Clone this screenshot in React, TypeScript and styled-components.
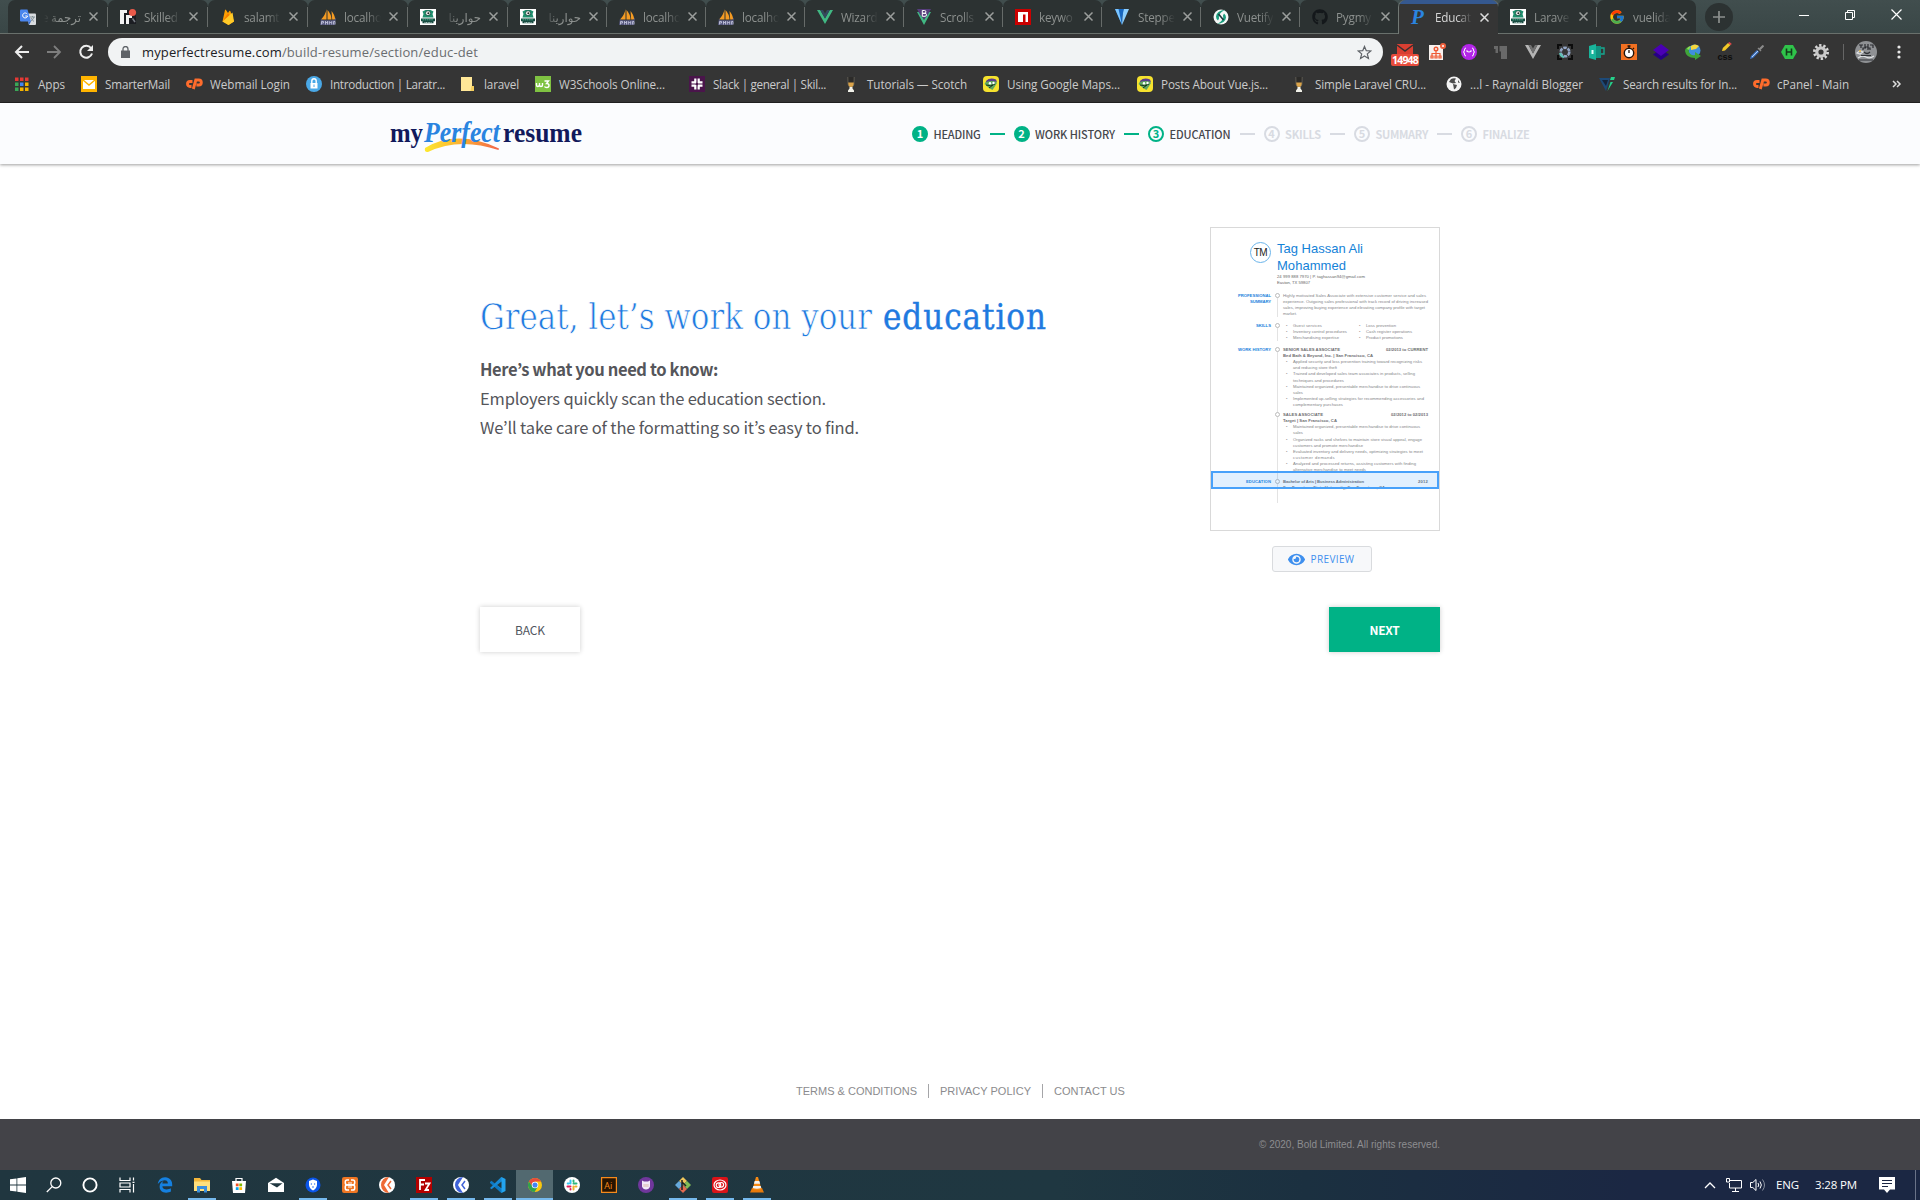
import React, { useLayoutEffect, useRef, useState } from "react";
import styled, { createGlobalStyle } from "styled-components";
import { FaGithub, FaEye, FaEdgeLegacy } from "react-icons/fa";
import { FcGoogle } from "react-icons/fc";

const SOURCE = `"Noto Sans CJK KR", "Open Sans", sans-serif`;
const SEGOE = `"Open Sans", "Noto Sans", "DejaVu Sans", sans-serif`;
const ARIAL = `"Liberation Sans", sans-serif`;

const Global = createGlobalStyle`
  * { box-sizing: border-box; }
  body { margin: 0; background: #fff; overflow: hidden; }
  svg { display: block; flex: none; }
`;

/* Text set to a fixed measure: the tracking is worked out from the natural width. */
const Measure = styled.span`
  display: inline-block;
  white-space: pre;
`;
const Fit = ({ w, children }: { w: number; children: React.ReactNode }) => {
  const ref = useRef<HTMLSpanElement>(null);
  const [track, setTrack] = useState(0);
  useLayoutEffect(() => {
    const el = ref.current;
    if (!el) return;
    const n = (el.textContent || "").length;
    setTrack((w - el.getBoundingClientRect().width) / n);
  }, [w]);
  return (
    <Measure ref={ref} style={{ letterSpacing: `${track}px` }}>
      {children}
    </Measure>
  );
};

/* ---------- icons ---------- */
const icons: Record<string, React.ReactNode> = {
  translate: (
    <>
      <path d="M6 4.500h9q1 0 1 1V15q0 1-1 1H9z" fill="#d9dcdf" />
      <path d="M0 1.500Q0 .5 1 .5h6.500L11 12.500H1q-1 0-1-1z" fill="#4a86ee" />
      <path d="M7.300 5.200A2.500 2.500 0 1 0 7.600 7H5.300" stroke="#fff" fill="none" />
      <path d="M10 8h5M12.500 7v1M14 8q-1 3-3.500 4.500M11 9q1 2 3 3.500" stroke="#7b8a92" strokeWidth=".9" fill="none" />
      <path d="M8 12.500h3l-2 3.500z" fill="#3367c7" />
    </>
  ),
  skilled: (
    <>
      <path d="M0 1h16v14H0z" fill="#1b1d22" />
      <path d="M0 1h7v3H4v11H0zM6 6h6v3H9v6H6z" fill="#f3f3f3" />
      <path d="M12.500 9.500 15 13" stroke="#777c84" strokeWidth="1.500" />
      <circle cx="12.500" cy="3.500" r="3.600" fill="#ea5a4a" />
    </>
  ),
  firebase: (
    <>
      <path d="M2.500 12.500 5 1q.4-1 1 0l2 3 1.300-2q.5-.6 1 0L14 12.500 8.500 16z" fill="#ffa000" />
      <path d="M2.500 12.500 8 4l2 3z" fill="#f57c00" />
      <path d="M2.500 12.500 12.500 3.500l1.500 9L8.500 16z" fill="#ffca28" />
    </>
  ),
  pma: (
    <>
      <path d="M6.500 0v10.500H1Q5.500 6 6.500 0zM7.500 1q4 4.500 4 9.500h-4zM11.500 2q3.700 4.500 3.700 8.500h-3z" fill="#f59b23" />
      <path d="M1 9.500q0 1.500 3 1.800h8q2.500 0 4-2.800L15 16H0z" fill="#55577c" />
      <path d="M1.500 15.500v-3h2v1.500h-2M5.500 12v3.500M7.500 12v3.500M5.500 13.500h2M9.300 15.500v-3l1.200 1.500 1.200-1.500v3M13.500 15.500v-3h1.500v3" stroke="#c9cbe2" strokeWidth=".8" fill="none" />
    </>
  ),
  monster: (
    <>
      <path d="M0 0h16v16H0z" fill="#fff" />
      <path d="M3.500 5 2.500 2.500 5.500 1h5l3 1.500-1 2.500 1 3.500h-11z" fill="#1f8f6e" />
      <circle cx="8" cy="4.200" r="2.400" fill="#fff" stroke="#153b33" strokeWidth=".7" />
      <circle cx="8.300" cy="4.200" r="1" fill="#222" />
      <path d="M1 9.500h14v2.800l-1.500 0v2h-11v-2H1z" fill="#184a40" />
      <path d="M2.500 10.800h11" stroke="#46b08e" strokeWidth="1" strokeDasharray="1.500 .7" />
      <path d="M4.500 13.500h7" stroke="#dff3ec" strokeWidth=".8" strokeDasharray="1 .6" />
    </>
  ),
  vue: (
    <>
      <path d="M0 1h3.200L8 9.500 12.800 1H16L8 15z" fill="#41b883" />
      <path d="M3.200 1H6l2 3.500L10 1h2.800L8 9.500z" fill="#34495e" />
    </>
  ),
  bvue: (
    <>
      <path d="M1 3h3l4 8 4-8h3L8 16z" fill="#41b883" />
      <path d="M1 0h14l-3 5.500-4 5-4-5z" fill="#563d7c" />
      <path d="M6.300 1.500h2.200a1.400 1.400 0 0 1 0 2.800H6.300zm0 2.800H9a1.400 1.400 0 0 1 0 3H6.300z" stroke="#fff" fill="none" />
    </>
  ),
  npm: (
    <>
      <path d="M0 0h16v16H0z" fill="#cb0000" />
      <path d="M3 3h10v10h-2.500V5.500H8V13H3z" fill="#fff" />
    </>
  ),
  vuetify: (
    <>
      <path d="M1 0h8l-1 16z" fill="#1867c0" />
      <path d="M1 0h3.500L8 16z" fill="#7bc6ff" />
      <path d="M9 0h6L8 16z" fill="#8fd0ff" />
      <path d="M5.500 0H10L8 8z" fill="#1867c0" />
    </>
  ),
  sandbox: (
    <>
      <circle cx="8" cy="8" r="7.500" fill="#f6f8f7" />
      <path d="M12 .8Q3.500 2 3 7.500q0 2.500 2 4l1-2Q4.500 5 12 .8zM4 15.200q8.500-1.200 9-6.700 0-2.500-2-4l-1 2q1.500 4.500-6 8.700z" fill="#1d9e7f" />
      <path d="m5.500 5 5 6" stroke="#23343c" strokeWidth="1.600" />
    </>
  ),
  envelope: (
    <>
      <path d="M0 0h16v16H0z" fill="#ffb400" />
      <path d="M2 4h12v9H2z" fill="#fff" />
      <path d="m2 4 6 5 6-5" stroke="#ffb400" strokeWidth="1.400" fill="none" />
    </>
  ),
  lock: (
    <>
      <circle cx="8" cy="8" r="8" fill="#4aa8e6" />
      <path d="M4.500 7h7v5.500h-7z" fill="#fff" />
      <path d="M5.800 7V5a2.200 2.200 0 0 1 4.400 0v2" stroke="#fff" strokeWidth="1.400" fill="none" />
      <path d="M8 8.500v2.500" stroke="#4aa8e6" />
    </>
  ),
  cpanel: (
    <path d="M6.500 5.500H4a2.400 2.400 0 0 0 0 5h1.500M7.300 13 9.800 4h3a2.500 2.500 0 0 1 0 5h-2.400" stroke="#ff6c2c" strokeWidth="2.900" fill="none" />
  ),
  folder: (
    <>
      <path d="M1 1h11v14H1z" fill="#ffe797" />
      <path d="M11.500 10H14v5h-3.500z" fill="#f5cf5e" />
    </>
  ),
  w3: (
    <>
      <path d="M0 0h16v16H0z" fill="#7fc242" />
      <path d="M1.500 7v2q0 1.500 1.300 1.500T4.500 9V7v2q0 1.500 1.500 1.500T7.500 9V7M9.500 5h4l-2 2.500q2.500 0 2.500 2t-2.200 2Q10 11.500 9.500 10.500" stroke="#fff" strokeWidth="1.400" fill="none" />
    </>
  ),
  slack: (
    <>
      <path d="M0 0h16v16H0z" fill="#4a154b" />
      <path d="M6.300 2.500v4.200M6.300 9v4.500M9.700 2.500V7M9.700 9.300v4.200M2.500 6.300H7M9 6.300h4.500M2.500 9.700h4.200M9 9.700h4.500" stroke="#fff" strokeWidth="2.200" />
    </>
  ),
  scotch: (
    <>
      <path d="M4.800 1 5 8q0 3 3 3t3-3l.2-7" stroke="#5d5a52" fill="#2c2b29" />
      <path d="M5.200 6.500h5.600q0 4.500-2.800 4.500T5.200 6.500z" fill="#dba44a" />
      <path d="M6.500 11h3v1.500l1.500 2v1.500H5v-1.500l1.500-2z" fill="#f2f2ea" />
    </>
  ),
  toon: (
    <>
      <rect width="16" height="16" rx="4" fill="#f6e22e" />
      <path d="M1.500 8Q4 3 8 3t6 4l-2.500 4-2 3-3.500-2z" fill="#5fa660" />
      <path d="M3 5q4-4 10-1.500L14 6Q9 4 3 6z" fill="#5b3b8f" />
      <path d="M3 9q5 2 9-1M6 12l4-3" stroke="#17321f" fill="none" />
      <circle cx="7" cy="7.300" r="1.200" fill="#fff" /><circle cx="10.500" cy="7" r="1.200" fill="#fff" />
    </>
  ),
  globe: (
    <>
      <circle cx="8" cy="8" r="7.500" fill="#f3f3f3" />
      <path d="M5 3q2-1 5-.5L8.500 5l1.500 2-3 .5L3 6zM7 8l4 1-1 3-2 1.500-.5-3zM12 4l2 3-2-.5z" fill="#4a4a4a" />
    </>
  ),
  seven: (
    <>
      <path d="M0 2h11L7 15z" fill="#1d4a78" />
      <path d="M3 4h6L7 10z" fill="#15233a" />
      <path d="m11.500 6-3 9 5.500-9zM12 1h4l-1 3h-4z" fill="#25d08a" />
    </>
  ),
  windows: <path d="M0 2.300 6.500 1.400V7.500H0zM7.300 1.300 16 0v7.500H7.300zM0 8.400h6.500v6.200L0 13.700zM7.300 8.400H16V16l-8.700-1.300z" fill="#fff" />,
  search: <g stroke="#fff" strokeWidth="1.300" fill="none"><circle cx="9.800" cy="6" r="5" /><path d="M6.200 9.600 .8 15" /></g>,
  cortana: <circle cx="8" cy="8" r="6.600" stroke="#fff" strokeWidth="1.900" fill="none" />,
  taskview: <path d="M1 .5v3h10v-3M1 15.500v-3h10v3M1 6h10v4H1zM14.500 .5v3M14.500 7v8.500M13.500 5.300h2" stroke="#fff" strokeWidth="1.200" fill="none" />,
  explorer: (
    <>
      <path d="M0 1h6l1.500 2H16v11H0z" fill="#f4b73b" />
      <path d="M0 4.500h16V14H0z" fill="#ffdf7c" />
      <path d="M3 15.500V9h10v6.500h-3V12H6v3.500z" fill="#3b8fdc" />
    </>
  ),
  store: (
    <>
      <path d="M1 4h14l-1 12H2z" fill="#fff" /><path d="M5 5V1.500h6V5" stroke="#fff" strokeWidth="1.200" fill="none" />
      <path d="M4.800 6.500h2.800v2.800H4.800z" fill="#f25022" /><path d="M8.300 6.500h2.800v2.800H8.300z" fill="#7fba00" />
      <path d="M4.800 10.200h2.800V13H4.800z" fill="#00a4ef" /><path d="M8.300 10.200h2.800V13H8.300z" fill="#ffb900" />
    </>
  ),
  mail: (
    <>
      <path d="M0 6 8 .8 16 6v9H0z" fill="#fff" /><path d="M1.500 6.200h13L9 10.500z" fill="#203740" />
      <path d="M6.500 10 1.500 6l6 6z" fill="#fff" />
    </>
  ),
  shield: (
    <>
      <circle cx="8" cy="8" r="7.500" fill="#0b55e8" />
      <path d="M8 2.500 12 4v4q-.5 3.500-4 5.500Q4.500 11.500 4 8V4z" fill="#fff" /><path d="M5.800 7H7M9 7h1.200M7.200 10h1.600" stroke="#0b55e8" />
    </>
  ),
  xampp: (
    <>
      <rect width="16" height="16" rx="2" fill="#ee7623" />
      <rect x="3.300" y="3" width="9.400" height="4.800" rx="1.800" stroke="#fff" strokeWidth="1.500" fill="none" />
      <rect x="3.300" y="8" width="9.400" height="5" rx="1.800" stroke="#fff" strokeWidth="1.500" fill="none" />
      <path d="M7 2h2v3H7zM7 11h2v3H7z" fill="#ee7623" /><path d="M7 5v6M9 5v6" stroke="#fff" />
    </>
  ),
  postO: (
    <>
      <circle cx="8" cy="8" r="8" fill="#fff" /><path d="m10 0-5 8 5 8A8 8 0 0 1 10 0" fill="#ee6a35" /><path d="m12 4-3 4 3 4" stroke="#ee6a35" strokeWidth="1.500" fill="none" />
    </>
  ),
  postB: (
    <>
      <circle cx="8" cy="8" r="8" fill="#fff" /><path d="m10 0-5 8 5 8A8 8 0 0 1 10 0" fill="#3f62d8" /><path d="m12 4-3 4 3 4" stroke="#3f62d8" strokeWidth="1.500" fill="none" />
    </>
  ),
  filezilla: (
    <>
      <path d="M0 0h16v16H0z" fill="#b30000" /><path d="M4 13V3h5M4 7.500h4M9 6.500h4.500L9.500 13H13" stroke="#fff" strokeWidth="1.800" fill="none" />
    </>
  ),
  vscode: (
    <>
      <path d="m11.500 0 4 2v12l-4 2L3.500 8z" fill="#23a4ee" /><path d="m0 5 1.500-1.200L11.500 12v4L0 6z" fill="#0d78c4" /><path d="M0 11 11.500 0v4.500L1.500 12.200z" fill="#1688d4" /><path d="M11.500 4.500v7L7 8z" fill="#203740" />
    </>
  ),
  chrome: (
    <>
      <circle cx="8" cy="8" r="8" fill="#f9c80e" /><path d="M1 4.100A8 8 0 0 1 15 4.100H8L5 9.500z" fill="#e64b3c" /><path d="M1 4.100A8 8 0 0 0 7.500 16L11.300 9.700 8 11 5 9.500z" fill="#2fa24e" />
      <circle cx="8" cy="8" r="3.700" fill="#fff" /><circle cx="8" cy="8" r="2.900" fill="#4384f3" />
    </>
  ),
  slackc: (
    <>
      <circle cx="8" cy="8" r="8" fill="#fff" /><g strokeWidth="2" strokeLinecap="round"><path d="M6.500 3.500v3M3.700 6.500h1" stroke="#36c5f0" /><path d="M9.500 6.500h3M9.500 3.500v1" stroke="#2eb67d" /><path d="M9.500 9.500v3M11.500 9.500h1" stroke="#ecb22e" /><path d="M3.500 9.500h3M6.500 12v.5" stroke="#e01e5a" /></g>
    </>
  ),
  ai: (
    <>
      <path d="M.6.600h14.800v14.800H.6z" fill="#281400" stroke="#f58a1c" strokeWidth="1.200" />
      <text x="3.200" y="11.500" fontSize="9" fontFamily="Open Sans" fill="#f58a1c">Ai</text>
    </>
  ),
  cat: (
    <>
      <circle cx="8" cy="8" r="8" fill="#70379c" /><path d="M4 3.500 6 4.500h4l2-1v6q-1 3-4 3t-4-3z" fill="#f2e9f8" /><path d="M5.300 7h5.400v3H5.300z" fill="#e6d0cf" />
    </>
  ),
  git: (
    <>
      <path d="m8 0 4 4-4 4-4-4z" fill="#f0c75c" /><path d="m12 4 4 4-4 4-4-4z" fill="#81bd57" /><path d="m4 4 4 4-4 4-4-4z" fill="#67a9db" /><path d="m8 8 4 4-4 4-4-4z" fill="#e46a50" /><path d="M7 3v10M7 5l4 4" stroke="#202020" strokeWidth="1.500" />
    </>
  ),
  cc: (
    <>
      <rect width="16" height="16" rx="2" fill="#da1318" />
      <ellipse cx="8" cy="8" rx="6" ry="5" fill="none" stroke="#fff" strokeWidth="1.200" />
      <circle cx="6.500" cy="8.200" r="2.300" stroke="#fff" strokeWidth="1.100" fill="none" /><circle cx="9.300" cy="7.800" r="2.300" stroke="#fff" strokeWidth="1.100" fill="none" />
    </>
  ),
  vlc: (
    <>
      <path d="M3 11h10l2 4.500H1z" fill="#e77a0c" /><path d="M7 0h2l3.500 12q-4.500 2-9 0z" fill="#f68a14" /><path d="M5.700 4h4.600l.9 2.700H4.900zM4.300 9h7.400l.6 2q-4.500 1.500-8.600 0z" fill="#f3f3f3" />
    </>
  ),
  gmail: (
    <>
      <path d="M0 0h16v12H0z" fill="#d93f32" /><path d="m0 1 8 6 8-6" stroke="#3a3030" strokeWidth="1.500" fill="none" />
    </>
  ),
  tree: (
    <>
      <path d="M0 1h14v15H0z" fill="#f7f1ee" /><circle cx="7" cy="5" r="1.800" stroke="#ef5a34" strokeWidth="1.400" fill="none" /><path d="M7 7v5M3 12V9.500h8V12M2 12h2v2H2zM6 12h2v2H6zM10 12h2v2h-2z" stroke="#ef5a34" strokeWidth="1.200" fill="none" /><circle cx="14" cy="2" r="3" fill="#f0613e" /><circle cx="14" cy="2" r="1" fill="#fff" />
    </>
  ),
  braces: (
    <>
      <circle cx="8" cy="8" r="8" fill="#b325e8" /><path d="M5 4Q3.500 4 3.500 6T2.300 8q1.200 0 1.200 2T5 12M11 4q1.500 0 1.500 2t1.200 2q-1.200 0-1.200 2T11 12M6 7.500q2 1 4 0" stroke="#fff" fill="none" /><circle cx="6" cy="7" r=".8" fill="#fff" /><circle cx="10" cy="7" r=".8" fill="#fff" />
    </>
  ),
  bars: <path d="M1 2h4v7H2.500V5H1zM6.500 2H14v13H8V7.500H6.500z" fill="#696969" />,
  grayvue: (
    <>
      <path d="M0 1h3.500L8 9.500 12.500 1H16L8 15z" fill="#b5b5b5" /><path d="M3.500 1H6l2 3.500L10 1h2.500L8 9.500z" fill="#717171" />
    </>
  ),
  lens: (
    <>
      <path d="M1 5V1h4M11 1h4v4M15 11v4h-4M5 15H1v-4" stroke="#0c0c0c" strokeWidth="2" fill="none" />
      <circle cx="8" cy="8" r="4.300" stroke="#93a5c4" strokeWidth="2.600" fill="none" strokeDasharray="3.500 1" />
      <path d="M3 9a5 5 0 0 0 4 4" stroke="#5ec3b6" strokeWidth="2" fill="none" />
    </>
  ),
  cup: (
    <>
      <path d="m0 2 7-2v16l-7-2z" fill="#19b49b" /><path d="M7 2h5v12H7z" fill="#11917f" /><path d="M12 4h3v6h-3" stroke="#19a890" strokeWidth="1.400" fill="none" /><path d="M2.500 6h2v4h-2z" fill="#e9fffb" />
    </>
  ),
  timer: (
    <>
      <path d="M0 0h16v16H0z" fill="#f27021" /><circle cx="8" cy="9" r="4.700" fill="#fff" stroke="#23130a" strokeWidth="1.400" /><path d="M8 9V6M6.500 2h3M8 2v2M12 4l1 1" stroke="#23130a" strokeWidth="1.300" />
    </>
  ),
  layers: (
    <>
      <path d="m8 5 8 5.500L8 16 0 10.500z" fill="#260084" /><path d="m8 0 8 6-8 6-8-6z" fill="#4a00b4" />
    </>
  ),
  idm: (
    <>
      <circle cx="9.500" cy="6.500" r="6" fill="#3f8fdc" /><path d="M6 2q4-3 8 0l-3 3-5 1z" fill="#f4d63d" /><path d="M0 7q0-4 5-4-2 3-1 5 2 4 6 3V8l6 4-6 4v-2Q1 14 0 7z" fill="#3fa43a" /><path d="M2 5q1-3 4-3L4 6z" fill="#8fdc54" />
    </>
  ),
  css: (
    <>
      <path d="m5 7 .8-3L11-1l2.500 2L8 6.500z" fill="#f3c927" /><path d="m11-1 1.500-1 2.300 2-1.300 1z" fill="#e4484b" />
      <text x="0.500" y="16" fontSize="9" fontWeight="700" fontFamily="Liberation Sans" textLength="15" fill="#0d0d0d">css</text>
    </>
  ),
  dropper: (
    <>
      <path d="m1 15 1-3 6-6 2 2-6 6z" fill="#3e77c9" /><path d="m3 13 6-6" stroke="#dbe6f6" strokeWidth=".8" /><path d="m8.500 4.500 1-1 3 3-1 1z" fill="#888" /><path d="m10 4.500 3.500-3.500q1.500 0 1.500 1.500l-3.500 3.500z" fill="#8b8b8b" />
    </>
  ),
  hex: (
    <>
      <path d="M4 1h8l4 7-4 7H4L0 8z" fill="#2fc34a" /><path d="M5.500 4.500v7M10.500 4.500v7M5.500 8h5" stroke="#123c1a" strokeWidth="1.600" />
    </>
  ),
  gear: (
    <>
      <circle cx="8" cy="8" r="6.600" stroke="#d6d6d6" strokeWidth="2.800" strokeDasharray="2.300 1.850" fill="none" /><circle cx="8" cy="8" r="4.200" stroke="#c9c9c9" strokeWidth="3.200" fill="#353535" />
    </>
  ),
};
const Icon = ({ name, size = 16 }: { name: string; size?: number }) => (
  <svg width={size} height={size} viewBox="0 0 16 16" overflow="visible">
    {name === "P" ? (
      <text x="0" y="15" fontSize="21" fontWeight="700" fontStyle="italic" fontFamily="Liberation Serif" fill="#2a84e0">P</text>
    ) : (
      icons[name]
    )}
  </svg>
);
const tabIcon = (name: string) =>
  name === "google" ? <FcGoogle size={16} /> : name === "github" ? <FaGithub size={16} color="#14181b" /> : <Icon name={name} />;

/* ---------- window frame ---------- */
const Screen = styled.div`
  width: 1920px;
  height: 1200px;
  display: flex;
  flex-direction: column;
  overflow: hidden;
  font-family: ${SEGOE};
`;
const TabStrip = styled.div`
  height: 34px;
  display: flex;
  padding-left: 8px;
  background: linear-gradient(#414e4e, #394646);
  box-shadow: inset 0 -1px #69706c;
  flex: none;
`;
const Tab = styled.div<{ $w: number; $active?: boolean; $line: boolean }>`
  width: ${(p) => p.$w}px;
  flex: none;
  height: ${(p) => (p.$active ? 34 : 33)}px;
  display: flex;
  align-items: center;
  padding: 0 0 0 12px;
  gap: 8px;
  border-radius: 7px 7px 0 0;
  color: ${(p) => (p.$active ? "#d5d5d5" : "#8d918f")};
  background: ${(p) => (p.$active ? "linear-gradient(#35588f 4px, #353535 4px)" : "#2c3232")};
  box-shadow: ${(p) => (p.$active ? "-1px 0 #717874, 1px 0 #717874" : "none")};
  &::after {
    content: "";
    width: 1px;
    height: 20px;
    margin-left: auto;
    background: ${(p) => (p.$line ? "#666b69" : "transparent")};
  }
`;
const TabTitle = styled.div<{ $rtl?: boolean }>`
  width: 37px;
  flex: none;
  overflow: hidden;
  white-space: nowrap;
  font-size: 11.700px;
  line-height: 22px;
  letter-spacing: -0.200px;
  direction: ${(p) => (p.$rtl ? "rtl" : "ltr")};
  mask-image: linear-gradient(to ${(p) => (p.$rtl ? "left" : "right")}, #000 60%, transparent);
`;
const Cross = ({ c = "#9b9e9c", s = 9, w = 1.5 }: { c?: string; s?: number; w?: number }) => (
  <svg width={s} height={s} viewBox={`0 0 ${s} ${s}`}>
    <path d={`M.5.5 ${s - 0.5} ${s - 0.5}M${s - 0.5}.5.5 ${s - 0.5}`} stroke={c} strokeWidth={w} />
  </svg>
);
const NewTab = styled.div`
  width: 28px;
  height: 28px;
  margin: 3px 0 0 9px;
  border-radius: 50%;
  background: #2c3232;
  display: grid;
  place-items: center;
`;
const WindowButtons = styled.div`
  margin-left: auto;
  display: flex;
  height: 29px;
  align-items: center;
  > svg { margin-right: 36px; }
  > svg:last-child { margin-right: 18px; }
`;
const tabs: [string, string, boolean?][] = [
  ["translate", "ترجمة e", true], ["skilled", "Skilled"], ["firebase", "salamt"], ["pma", "localho"], ["monster", "حوارينا", true],
  ["monster", "حوارينا", true], ["pma", "localho"], ["pma", "localho"], ["vue", "Wizard"], ["bvue", "Scrolls"], ["npm", "keywo"],
  ["vuetify", "Steppe"], ["sandbox", "Vuetify"], ["github", "Pygmy"], ["P", "Educat"], ["monster", "Larave"], ["google", "vuelida"],
];

const Toolbar = styled.div`
  height: 36px;
  background: #353535;
  display: flex;
  align-items: center;
  padding: 0 0 0 14px;
  flex: none;
`;
const NavIcons = styled.div`
  display: flex;
  gap: 16px;
  width: 94px;
`;
const Omnibox = styled.div`
  width: 1275px;
  height: 28px;
  border-radius: 14px;
  background: #f1f3f4;
  display: flex;
  align-items: center;
  padding: 0 11px 0 13px;
  font-size: 13px;
  color: #6a6d70;
  > span { margin-left: 12px; }
  > svg:last-child { margin-left: auto; }
`;
const Host = styled.span`
  color: #202124;
`;
const Extensions = styled.div`
  display: flex;
  gap: 16px;
  margin-left: 14px;
  align-items: center;
`;
const BadgeSlot = styled.div`
  position: relative;
`;
const Badge = styled.div`
  position: absolute;
  left: -6px;
  top: 10px;
  width: 28px;
  height: 12px;
  border-radius: 2px;
  background: #e74c3c;
  color: #fff;
  font-size: 10.500px;
  font-weight: 700;
  line-height: 12px;
  text-align: center;
  letter-spacing: -0.800px;
`;
const Rule = styled.div`
  width: 1px;
  height: 16px;
  margin: 0 11px 0 14px;
  background: #666;
`;
const Bookmarks = styled.div`
  height: 33px;
  background: #353535;
  border-bottom: 1px solid #222;
  display: flex;
  padding: 0 0 5px 13px;
  font-size: 11.700px;
  color: #cbcbcb;
  flex: none;
`;
const Bookmark = styled.div<{ $w: number }>`
  width: ${(p) => p.$w}px;
  display: flex;
  align-items: center;
  gap: 8px;
  flex: none;
`;
const Apps = () => (
  <svg width="17" height="16" viewBox="0 0 17 16">
    {["#e53935", "#e53935", "#e53935", "#3aa757", "#4285f4", "#f5b400", "#3aa757", "#f5b400", "#f5b400"].map((c, i) => (
      <rect key={i} x={2 + (i % 3) * 5} y={1.5 + Math.floor(i / 3) * 5} width="3.500" height="3.500" fill={c} />
    ))}
  </svg>
);
const bookmarks: [string, string, number, number][] = [
  ["apps", "Apps", 27, 68], ["envelope", "SmarterMail", 65, 105], ["cpanel", "Webmail Login", 80, 120], ["lock", "Introduction | Laratr...", 115, 154],
  ["folder", "laravel", 35, 75], ["w3", "W3Schools Online...", 106, 154], ["slack", "Slack | general | Skil...", 113, 154], ["scotch", "Tutorials — Scotch", 100, 140],
  ["toon", "Using Google Maps...", 113, 154], ["toon", "Posts About Vue.js...", 107, 154], ["scotch", "Simple Laravel CRU...", 111, 155],
  ["globe", "...l - Raynaldi Blogger", 113, 153], ["seven", "Search results for In...", 114, 154], ["cpanel", "cPanel - Main", 72, 139],
];

/* ---------- page ---------- */
const Page = styled.div`
  height: 1067px;
  display: flex;
  flex-direction: column;
  background: #fff;
  flex: none;
`;
const Header = styled.header`
  height: 61px;
  flex: none;
  background: #fbfcfe;
  box-shadow: 0 1px 3px rgba(0, 0, 0, 0.38);
  display: flex;
  padding: 11px 0 11px 389px;
`;
const Steps = styled.div`
  display: flex;
  align-items: center;
  margin-left: 327px;
  font-family: ${SOURCE};
  font-size: 11px;
`;
const Dot = styled.span<{ $s: string }>`
  width: 16px;
  height: 16px;
  border-radius: 50%;
  border: 2px solid ${(p) => (p.$s === "todo" ? "#d8dbe2" : "#00b286")};
  background: ${(p) => (p.$s === "done" ? "#00b286" : "transparent")};
  color: ${(p) => (p.$s === "done" ? "#fff" : p.$s === "now" ? "#00b286" : "#d8dbe2")};
  font-weight: 700;
  line-height: 11px;
  text-align: center;
`;
const StepName = styled.span<{ $w: number; $s: string }>`
  width: ${(p) => p.$w}px;
  margin-left: 5.500px;
  color: ${(p) => (p.$s === "todo" ? "#d8dbe2" : "#46464c")};
  font-weight: ${(p) => (p.$s === "todo" ? 700 : 500)};
  line-height: 16px;
`;
const Dash = styled.span<{ $s: string }>`
  width: 15px;
  height: 2px;
  margin: 0 9px;
  background: ${(p) => (p.$s === "done" ? "#00b286" : "#d8dbe2")};
`;
const steps: [string, number, string][] = [
  ["HEADING", 47, "done"], ["WORK HISTORY", 80, "done"], ["EDUCATION", 61, "now"], ["SKILLS", 36, "todo"], ["SUMMARY", 52.5, "todo"], ["FINALIZE", 47, "todo"],
];
const Main = styled.main`
  width: 960px;
  margin: 0 auto;
  padding-top: 63px;
  display: flex;
  justify-content: space-between;
`;
const Intro = styled.div`
  padding-top: 62px;
`;
const Title = styled.h1`
  margin: 0 0 10px;
  display: flex;
  gap: 11px;
  font: 400 34.500px/56px "DejaVu Serif Condensed", "DejaVu Serif", serif;
  font-stretch: condensed;
  color: #1f7ae0;
  -webkit-text-stroke: 0.650px #fff;
`;
const Strong = styled.b`
  font-weight: 400;
  -webkit-text-stroke: 0.400px #1f7ae0;
`;
const Copy = styled.div<{ $bold?: boolean }>`
  font: ${(p) => (p.$bold ? 700 : 400)} 16.500px/29px ${SOURCE};
  color: #55565b;
`;
const Side = styled.aside`
  width: 230px;
  display: flex;
  flex-direction: column;
  align-items: center;
`;
const Sheet = styled.div`
  position: relative;
  width: 230px;
  height: 304px;
  border: 1px solid #d9d9d9;
  font: 4.200px/6px ${ARIAL};
  color: #77787b;
  padding-top: 12px;
`;
const Person = styled.div`
  display: flex;
  padding-left: 39px;
  gap: 6px;
`;
const Monogram = styled.div`
  width: 21px;
  height: 21px;
  margin-top: 2px;
  border: 1px solid #6ab4ea;
  border-radius: 50%;
  font-size: 10px;
  line-height: 19px;
  text-align: center;
  letter-spacing: -0.500px;
  color: #222;
`;
const PersonName = styled.div`
  font-size: 13px;
  line-height: 17px;
  color: #1482d8;
`;
const Contact = styled.div`
  padding: 0 0 0 66px;
  color: #666;
  margin-bottom: 7px;
`;
const Section = styled.section<{ $top: number }>`
  display: flex;
  margin-top: ${(p) => p.$top}px;
`;
const Label = styled.div`
  width: 60px;
  text-align: right;
  font-weight: 700;
  color: #1a7fdc;
`;
const Timeline = styled.div`
  width: 5px;
  margin: 0 3px 0 4px;
  display: flex;
  justify-content: center;
  background: linear-gradient(90deg, transparent 2px, #e3e3e3 2px, #e3e3e3 3px, transparent 3px);
`;
const Ring = styled.div`
  width: 5px;
  height: 5px;
  border: 1px solid #bbb;
  border-radius: 50%;
  background: #fff;
`;
const Body = styled.div`
  flex: 1;
  padding-right: 11px;
`;
const Line = styled.div<{ $in?: boolean; $gap?: number; $bold?: boolean; $split?: boolean }>`
  height: 6px;
  margin-bottom: ${(p) => p.$gap ?? 0.05}px;
  padding-left: ${(p) => (p.$in ? 10 : 0)}px;
  font-weight: ${(p) => (p.$bold ? 700 : 400)};
  color: ${(p) => (p.$bold ? "#6d6d70" : "#858689")};
  display: flex;
  justify-content: ${(p) => (p.$split ? "space-between" : "flex-start")};
`;
const Bullet = styled.span`
  width: 7px;
  margin-left: -7px;
  &::before { content: "•"; }
`;
const Cols = styled.div`
  display: grid;
  grid-template-columns: 73px 1fr;
`;
const Highlight = styled.div`
  position: absolute;
  left: 0;
  top: 243px;
  width: 228px;
  height: 18px;
  border: 2px solid #48a1fa;
  background: rgba(72, 161, 250, 0.16);
`;
const Preview = styled.button`
  width: 100px;
  height: 26px;
  margin: 15px 6px 0 0;
  padding: 0 2px 0 0;
  border: 1px solid #d9dbde;
  border-radius: 3px;
  background: #f7f8fa;
  color: #3e8fee;
  font: 10px/16px ${SEGOE};
  display: flex;
  align-items: center;
  justify-content: center;
  gap: 6px;
`;
const Actions = styled.div`
  width: 960px;
  margin: 35px auto 0;
  display: flex;
  justify-content: space-between;
`;
const Action = styled.button<{ $primary?: boolean }>`
  width: ${(p) => (p.$primary ? 111 : 100)}px;
  height: 45px;
  padding: 0;
  border: 0;
  box-shadow: 0 0 5px rgba(0, 0, 0, 0.2);
  background: ${(p) => (p.$primary ? "#00b286" : "#fff")};
  color: ${(p) => (p.$primary ? "#fff" : "#515660")};
  font: ${(p) => (p.$primary ? 700 : 400)} 12px/20px ${SOURCE};
`;
const Links = styled.nav`
  margin: auto 0 21px 1px;
  display: flex;
  justify-content: center;
  font: 11px/14px ${ARIAL};
  color: #8b8b8e;
`;
const FootLink = styled.a`
  padding: 0 11px 0 11px;
  & + & { border-left: 1px solid #a5a5a8; }
`;
const Footer = styled.footer`
  height: 51px;
  flex: none;
  background: #434348;
  padding: 0 480px;
  text-align: right;
  font: 10px/52px ${ARIAL};
  color: #8d8d90;
`;

const Logo = () => (
  <svg width="196" height="44" viewBox="0 0 196 44">
    <defs>
      <linearGradient id="swoosh"><stop offset="0" stopColor="#fde92f" /><stop offset=".5" stopColor="#fcae32" /><stop offset="1" stopColor="#f2644a" /></linearGradient>
    </defs>
    <path d="M36 34Q68 15 110 34.500L109.500 36Q70 23 39 38 35 38.500 36 34Z" fill="url(#swoosh)" />
    <g fontFamily="Liberation Serif" fontWeight="700">
      <text x="1" y="28" fontSize="27" textLength="33" lengthAdjust="spacingAndGlyphs" fill="#11195c">my</text>
      <text x="35" y="28" fontSize="29" fontStyle="italic" textLength="76" lengthAdjust="spacingAndGlyphs" fill="#2a84e0">Perfect</text>
      <text x="114" y="28" fontSize="27" textLength="79" lengthAdjust="spacingAndGlyphs" fill="#11195c">resume</text>
    </g>
  </svg>
);

const Item = ({ w, t, b, gap, bold }: { w: number; t: string; b?: boolean; gap?: number; bold?: boolean }) => (
  <Line $in={!bold} $gap={gap} $bold={bold}>
    {b && <Bullet />}
    <Fit w={w}>{t}</Fit>
  </Line>
);
const Plain = ({ w, t }: { w: number; t: string }) => (
  <Line><Fit w={w}>{t}</Fit></Line>
);
const Job = ({ t, w, r, rw }: { t: string; w: number; r: string; rw: number }) => (
  <Line $bold $split><Fit w={w}>{t}</Fit><Fit w={rw}>{r}</Fit></Line>
);

const Resume = () => (
  <Sheet>
    <Person>
      <Monogram>TM</Monogram>
      <PersonName>
        <div><Fit w={86}>Tag Hassan Ali</Fit></div>
        <div><Fit w={69}>Mohammed</Fit></div>
      </PersonName>
    </Person>
    <Contact>
      <div><Fit w={88}>24 999 888 7970 | P. taghassan94@gmail.com</Fit></div>
      <div><Fit w={33}>Easton, TX 59807</Fit></div>
    </Contact>
    <Section $top={0}>
      <Label><div><Fit w={33}>PROFESSIONAL</Fit></div><div><Fit w={21}>SUMMARY</Fit></div></Label>
      <Timeline><Ring /></Timeline>
      <Body>
        <Plain w={143} t="Highly motivated Sales Associate with extensive customer service and sales" />
        <Plain w={145} t="experience. Outgoing sales professional with track record of driving increased" />
        <Plain w={142} t="sales, improving buying experience and elevating company profile with target" />
        <Plain w={14} t="market." />
      </Body>
    </Section>
    <Section $top={6}>
      <Label><Fit w={15}>SKILLS</Fit></Label>
      <Timeline><Ring /></Timeline>
      <Body>
        <Cols>
          <div><Item b w={29} t="Guest services" /><Item b w={54} t="Inventory control procedures" /><Item b w={46} t="Merchandising expertise" /></div>
          <div><Item b w={30} t="Loss prevention" /><Item b w={46} t="Cash register operations" /><Item b w={37} t="Product promotions" /></div>
        </Cols>
      </Body>
    </Section>
    <Section $top={5.3}>
      <Label><Fit w={33}>WORK HISTORY</Fit></Label>
      <Timeline><Ring /></Timeline>
      <Body>
        <Job t="SENIOR SALES ASSOCIATE" w={57} r="02/2013 to CURRENT" rw={42} />
        <Item bold w={90} t="Bed Bath & Beyond, Inc. | San Francisco, CA" gap={0.3} />
        <Item b w={129} t="Applied security and loss prevention training toward recognizing risks" />
        <Item w={44} t="and reducing store theft" />
        <Item b w={122} t="Trained and developed sales team associates in products, selling" gap={0.8} />
        <Item w={51} t="techniques and procedures" />
        <Item b w={127} t="Maintained organized, presentable merchandise to drive continuous" />
        <Item w={10} t="sales" />
        <Item b w={131} t="Implemented up-selling strategies for recommending accessories and" />
        <Item w={50} t="complementary purchases" gap={3.7} />
      </Body>
    </Section>
    <Section $top={0}>
      <Label />
      <Timeline><Ring /></Timeline>
      <Body>
        <Job t="SALES ASSOCIATE" w={40} r="02/2012 to 02/2013" rw={37} />
        <Item bold w={54} t="Target | San Francisco, CA" />
        <Item b w={127} t="Maintained organized, presentable merchandise to drive continuous" />
        <Item w={10} t="sales" gap={0.9} />
        <Item b w={129} t="Organized racks and shelves to maintain store visual appeal, engage" />
        <Item w={70} t="customers and promote merchandise" />
        <Item b w={130} t="Evaluated inventory and delivery needs, optimizing strategies to meet" />
        <Item w={42} t="customer demands" />
        <Item b w={123} t="Analyzed and processed returns, assisting customers with finding" />
        <Item w={73} t="alternative merchandise to meet needs" gap={5.7} />
      </Body>
    </Section>
    <Section $top={0}>
      <Label><Fit w={25}>EDUCATION</Fit></Label>
      <Timeline><Ring /></Timeline>
      <Body>
        <Job t="Bachelor of Arts | Business Administration" w={81} r="2012" rw={10} />
        <Item bold w={102} t="San Francisco State University, San Francisco, CA" gap={12} />
      </Body>
    </Section>
    <Highlight />
  </Sheet>
);

/* ---------- taskbar ---------- */
const Taskbar = styled.div`
  height: 30px;
  flex: none;
  display: flex;
  background: linear-gradient(90deg, #20363f, #1f3741 55%, #1b3040 68%, #1b2743 85%, #1b2743);
  color: #fff;
  padding-right: 4px;
`;
const Task = styled.div<{ $w?: number; $open?: boolean; $active?: boolean }>`
  width: ${(p) => p.$w ?? 37}px;
  display: grid;
  place-items: center;
  background: ${(p) => (p.$active ? "#526970" : "none")};
  background-image: ${(p) => (p.$open || p.$active ? "linear-gradient(#76b9ed, #76b9ed)" : "none")};
  background-size: ${(p) => (p.$active ? "100%" : "28px")} 2px;
  background-position: bottom center;
  background-repeat: no-repeat;
`;
const Tray = styled.div`
  margin-left: auto;
  width: 213px;
  display: flex;
  align-items: center;
  border-right: 1px solid #6a7388;
  font-size: 11.500px;
  padding-bottom: 1px;
`;
const Spot = styled.span<{ $gap: number }>`
  margin-left: ${(p) => p.$gap}px;
`;
const tasks: [string, boolean][] = [
  ["edge", false], ["explorer", true], ["store", false], ["mail", false], ["shield", true], ["xampp", false], ["postO", false], ["filezilla", true],
  ["postB", true], ["vscode", true], ["chrome", false], ["slackc", false], ["ai", false], ["cat", false], ["git", true], ["cc", true], ["vlc", true],
];

export default function App() {
  return (
    <Screen>
      <Global />
      <TabStrip>
        {tabs.map(([icon, title, rtl], i) => (
          <Tab key={i} $w={i < 5 ? 100 : 99} $active={i === 14} $line={i < 13 || i === 15}>
            {tabIcon(icon)}
            <TabTitle $rtl={rtl}>{title}</TabTitle>
            <Cross c={i === 14 ? "#ddd" : undefined} />
          </Tab>
        ))}
        <NewTab>
          <svg width="12" height="12"><path d="M6 0v12M0 6h12" stroke="#8c908e" strokeWidth="1.700" /></svg>
        </NewTab>
        <WindowButtons>
          <svg width="10" height="10"><path d="M0 5.500h10" stroke="#fff" /></svg>
          <svg width="10" height="10"><path d="M.5 2.500h7v7h-7zM2.500 2.500v-2h7v7h-2" stroke="#fff" fill="none" /></svg>
          <Cross c="#fff" s={11} w={1.2} />
        </WindowButtons>
      </TabStrip>
      <Toolbar>
        <NavIcons>
          <svg width="16" height="16" viewBox="0 0 16 16"><path d="M15 8H2M8 2 2 8l6 6" stroke="#eee" strokeWidth="2" fill="none" /></svg>
          <svg width="16" height="16" viewBox="0 0 16 16"><path d="M1 8h13M8 2l6 6-6 6" stroke="#7e7e7e" strokeWidth="1.800" fill="none" /></svg>
          <svg width="16" height="16" viewBox="0 0 16 16"><path d="M13 4A6 6 0 1 0 14 9.500" stroke="#eee" strokeWidth="2" fill="none" /><path d="M15 1v6H9z" fill="#eee" /></svg>
        </NavIcons>
        <Omnibox>
          <svg width="9" height="12" viewBox="0 0 9 12"><path d="M0 4.500h9V12H0z" fill="#5f6368" /><path d="M2 5V3a2.500 2.500 0 0 1 5 0v2" stroke="#5f6368" strokeWidth="1.300" fill="none" /></svg>
          <span><Fit w={336}><Host>myperfectresume.com</Host>/build-resume/section/educ-det</Fit></span>
          <svg width="15" height="15" viewBox="0 0 16 16"><path d="m8 1.500 1.900 4.500 4.800.4L11 9.500l1.200 4.800L8 11.800l-4.200 2.500L5 9.500 1.300 6.400 6.100 6z" stroke="#5f6368" strokeWidth="1.300" fill="none" /></svg>
        </Omnibox>
        <Extensions>
          <BadgeSlot><Icon name="gmail" /><Badge>14948</Badge></BadgeSlot>
          {["tree", "braces", "bars", "grayvue", "lens", "cup", "timer", "layers", "idm", "css", "dropper", "hex", "gear"].map((n) => <Icon key={n} name={n} />)}
        </Extensions>
        <Rule />
        <svg width="22" height="22" viewBox="0 0 22 22">
          <circle cx="11" cy="11" r="11" fill="#8f9194" />
          <path d="M4 4h4M6 4v3M10 3v3h3V3M15 4h3v3M8 9v-2h3M13 9V7h2v2" stroke="#2a2c30" strokeWidth="1.200" fill="none" />
          <path d="M2 12q3-3 6-1l-3 2zM3 17q4-3 8-1t8-1" stroke="#dfe1e3" strokeWidth="1.200" fill="none" /><path d="M4 19h14M6 14.500h10M9 11q3 3 6 0" stroke="#303236" strokeWidth="1.200" fill="none" />
          <circle cx="5" cy="10" r="1" fill="#e6b94d" />
        </svg>
        <svg width="4" height="16" style={{ marginLeft: 20 }}><g fill="#e8e8e8"><circle cx="2" cy="3" r="1.600" /><circle cx="2" cy="8" r="1.600" /><circle cx="2" cy="13" r="1.600" /></g></svg>
      </Toolbar>
      <Bookmarks>
        {bookmarks.map(([icon, text, w, step], i) => (
          <Bookmark key={i} $w={step}>
            {icon === "apps" ? <Apps /> : <Icon name={icon} />}
            <Fit w={w}>{text}</Fit>
          </Bookmark>
        ))}
        <Bookmark $w={10}><svg width="10" height="8"><path d="m1 1 3 3-3 3M5 1l3 3-3 3" stroke="#ddd" strokeWidth="1.500" fill="none" /></svg></Bookmark>
      </Bookmarks>
      <Page>
        <Header>
          <Logo />
          <Steps>
            {steps.map(([name, w, s], i) => (
              <React.Fragment key={name}>
                {i > 0 && <Dash $s={i < 3 ? "done" : "todo"} />}
                <Dot $s={s}>{i + 1}</Dot>
                <StepName $w={w} $s={s}><Fit w={w}>{name}</Fit></StepName>
              </React.Fragment>
            ))}
          </Steps>
        </Header>
        <Main>
          <Intro>
            <Title>
              <Fit w={392}>Great, let’s work on your</Fit>
              <Strong><Fit w={164}>education</Fit></Strong>
            </Title>
            <Copy $bold><Fit w={238}>Here’s what you need to know:</Fit></Copy>
            <Copy><Fit w={346}>Employers quickly scan the education section.</Fit></Copy>
            <Copy><Fit w={379}>We’ll take care of the formatting so it’s easy to find.</Fit></Copy>
          </Intro>
          <Side>
            <Resume />
            <Preview><FaEye size={17} /><Fit w={44}>PREVIEW</Fit></Preview>
          </Side>
        </Main>
        <Actions>
          <Action><Fit w={30}>BACK</Fit></Action>
          <Action $primary><Fit w={30}>NEXT</Fit></Action>
        </Actions>
        <Links>
          <FootLink><Fit w={121}>TERMS & CONDITIONS</Fit></FootLink>
          <FootLink><Fit w={91}>PRIVACY POLICY</Fit></FootLink>
          <FootLink><Fit w={71}>CONTACT US</Fit></FootLink>
        </Links>
        <Footer><Fit w={181}>© 2020, Bold Limited. All rights reserved.</Fit></Footer>
      </Page>
      <Taskbar>
        <Task $w={36}><Icon name="windows" /></Task>
        <Task $w={36}><Icon name="search" /></Task>
        <Task $w={36}><Icon name="cortana" /></Task>
        <Task $w={38}><Icon name="taskview" /></Task>
        {tasks.map(([name, open]) => (
          <Task key={name} $open={open} $active={name === "chrome"}>
            {name === "edge" ? <FaEdgeLegacy size={16} color="#1580e0" /> : <Icon name={name} size={name === "chrome" ? 14 : 16} />}
          </Task>
        ))}
        <Tray>
          <Spot $gap={1}><svg width="12" height="8"><path d="m1 7 5-5 5 5" stroke="#fff" strokeWidth="1.300" fill="none" /></svg></Spot>
          <Spot $gap={10}><svg width="16" height="14"><path d="M4 2.500h11.500v7.500H3.500V5M.5.500h3v3.500h-3zM9.500 10v3M6 13.500h7" stroke="#fff" fill="none" /></svg></Spot>
          <Spot $gap={8}><svg width="16" height="14"><path d="M.5 4.500h2.300L6 1.500v11L2.800 9.500H.5zM8 5q1.500 2 0 4M10 3.500q2.700 3.500 0 7" stroke="#fff" fill="none" /><path d="M12.500 1.500q4 5.500 0 11" stroke="#8a92a0" fill="none" /></svg></Spot>
          <Spot $gap={10}><Fit w={23}>ENG</Fit></Spot>
          <Spot $gap={16}><Fit w={42}>3:28 PM</Fit></Spot>
          <Spot $gap={22}><svg width="16" height="16"><path d="M0 0h16v12.500h-5L8 16l-3-3.500H0z" fill="#fff" /><path d="M3 3.500h10M3 6.500h10M3 9.500h6" stroke="#1b2743" /></svg></Spot>
        </Tray>
      </Taskbar>
    </Screen>
  );
}
